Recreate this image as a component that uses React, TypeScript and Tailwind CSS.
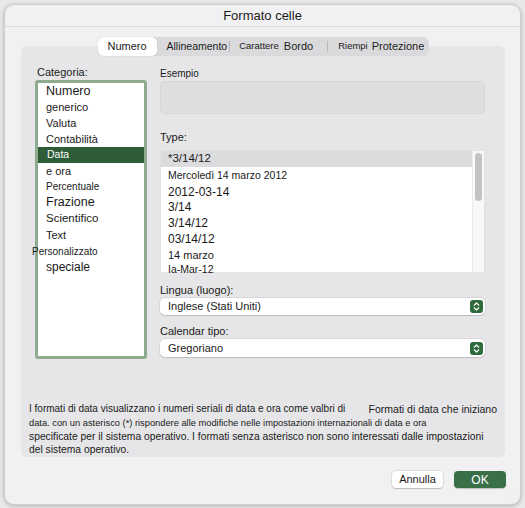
import React from 'react';

const categories: { label: string; h: string; size: string; selected?: boolean; shift?: boolean }[] = [
    { label: 'Numero', h: 'h-[17px]', size: 'text-[12.5px]' },
    { label: 'generico', h: 'h-[15px]', size: 'text-[11px]' },
    { label: 'Valuta', h: 'h-[16px]', size: 'text-[11px]' },
    { label: 'Contabilità', h: 'h-[16px]', size: 'text-[11px]' },
    { label: 'Data', h: 'h-[16px]', size: 'text-[10.5px]', selected: true },
    { label: 'e ora', h: 'h-[16px]', size: 'text-[11px]' },
    { label: 'Percentuale', h: 'h-[15px]', size: 'text-[10px]' },
    { label: 'Frazione', h: 'h-[16px]', size: 'text-[12.5px]' },
    { label: 'Scientifico', h: 'h-[17px]', size: 'text-[11.5px]' },
    { label: 'Text', h: 'h-[16px]', size: 'text-[11px]' },
    { label: 'Personalizzato', h: 'h-[16px]', size: 'text-[10px]', shift: true },
    { label: 'speciale', h: 'h-[16px]', size: 'text-[12px]' },
];

const types: { label: string; h: string; size: string; selected?: boolean }[] = [
    { label: '*3/14/12', h: 'h-[16px]', size: 'text-[11.5px]', selected: true },
    { label: 'Mercoledì 14 marzo 2012', h: 'h-[18px]', size: 'text-[10.5px]' },
    { label: '2012-03-14', h: 'h-[14px]', size: 'text-[12px]' },
    { label: '3/14', h: 'h-[16px]', size: 'text-[12px]' },
    { label: '3/14/12', h: 'h-[16px]', size: 'text-[12px]' },
    { label: '03/14/12', h: 'h-[16px]', size: 'text-[12px]' },
    { label: '14 marzo', h: 'h-[17px]', size: 'text-[11px]' },
    { label: 'Ia-Mar-12', h: 'h-[12px]', size: 'text-[10.5px]' },
];

const Stepper: React.FC = () => (
    <svg width="13" height="13" viewBox="0 0 13 13" className="shrink-0">
        <rect x="0" y="0" width="13" height="13" rx="3" fill="#2f6a3d" />
        <path d="M4.2 5.2 L6.5 3 L8.8 5.2" fill="none" stroke="#fff" strokeWidth="1.2" strokeLinecap="round" strokeLinejoin="round" />
        <path d="M4.2 7.8 L6.5 10 L8.8 7.8" fill="none" stroke="#fff" strokeWidth="1.2" strokeLinecap="round" strokeLinejoin="round" />
    </svg>
);

const Select: React.FC<{ value: string; h: string }> = ({ value, h }) => (
    <div className={`flex ${h} w-full items-center justify-between rounded-[5px] bg-white pl-[8px] pr-[2px] shadow-[0_0_0_1px_rgba(0,0,0,0.06),0_1px_1px_rgba(0,0,0,0.12)]`}>
        <span className="text-[11px] text-[#1a1a1a]">{value}</span>
        <Stepper />
    </div>
);

const App: React.FC = () => {
    return (
        <div
            className="h-[508px] w-[525px] overflow-hidden bg-[#e9e9e9] pl-[4px] pt-[4px] text-[#1a1a1a]"
            style={{ fontFamily: '"Liberation Sans", Arial, sans-serif' }}
        >
            <div className="flex h-[501px] w-[517px] flex-col rounded-[10px] border border-[#cfcfd2] bg-[#f1f1f3] shadow-[0_1px_4px_rgba(0,0,0,0.25)]">
                {/* Title bar */}
                <div className="flex h-[22px] shrink-0 items-center justify-center border-b border-[#dcdcde] text-[13px]">
                    Formato celle
                </div>

                {/* Tabbed panel */}
                <div className="ml-[16px] mt-[19px] h-[411px] w-[484px] rounded-[6px] bg-[#e6e6e8]">
                    <div className="-mt-[9px] flex justify-center">
                        <div className="flex h-[19px] w-[331px] items-center whitespace-nowrap rounded-[6px] bg-[#dadadc] text-[11px]">
                            <div className="flex h-[19px] w-[59px] shrink-0 items-center justify-center rounded-[5px] bg-white shadow-[0_0_1px_rgba(0,0,0,0.3)]">
                                Numero
                            </div>
                            <span className="ml-[10px] text-[10.5px]">Allineamento</span>
                            <span className="ml-[2px] h-[11px] w-px shrink-0 bg-[#b8b8ba]" />
                            <span className="ml-[9px] text-[9.5px]">Carattere</span>
                            <span className="ml-[5px]">Bordo</span>
                            <span className="ml-[14px] h-[11px] w-px shrink-0 bg-[#b8b8ba]" />
                            <span className="ml-[10px] text-[9.5px]">Riempi</span>
                            <span className="ml-[4px]">Protezione</span>
                        </div>
                    </div>

                    <div className="mt-[9px] flex gap-[13px] pl-[14px]">
                        {/* Category column */}
                        <div className="flex w-[112px] flex-col">
                            <div className="flex h-[15px] items-center pl-[2px] text-[11px]">Categoria:</div>
                            <div className="h-[279px] rounded-[3px] border-[3px] border-[#8fab8f] bg-white">
                                {categories.map((c) => (
                                    <div
                                        key={c.label}
                                        className={[
                                            'flex items-center whitespace-nowrap',
                                            c.h,
                                            c.size,
                                            c.selected ? 'bg-[#2e5c36] pl-[9px] text-white' : 'pl-[8px]',
                                            c.shift ? '-ml-[14px]' : '',
                                        ].join(' ')}
                                    >
                                        {c.label}
                                    </div>
                                ))}
                            </div>
                        </div>

                        {/* Right column */}
                        <div className="flex w-[325px] flex-col">
                            <div className="flex h-[16px] items-center text-[10px]">Esempio</div>
                            <div className="h-[33px] rounded-[5px] bg-[#dededf] shadow-[inset_0_0_0_1px_rgba(0,0,0,0.03)]" />

                            <div className="mt-[16px] flex h-[14px] items-center text-[11px]">Type:</div>
                            <div className="mt-[6px] flex h-[123px] border border-[#e2e2e4] bg-white">
                                <div className="flex-1">
                                    {types.map((t) => (
                                        <div
                                            key={t.label}
                                            className={[
                                                'flex items-center whitespace-nowrap pl-[7px]',
                                                t.h,
                                                t.size,
                                                t.selected ? 'bg-[#dcdcde]' : '',
                                            ].join(' ')}
                                        >
                                            {t.label}
                                        </div>
                                    ))}
                                </div>
                                <div className="w-[12px] border-l border-[#ececec] bg-[#f8f8f8] pt-[2px]">
                                    <div className="mx-auto h-[48px] w-[7px] rounded-full bg-[#c3c3c5]" />
                                </div>
                            </div>

                            <div className="mt-[11px] flex h-[13px] items-center text-[11px]">Lingua (luogo):</div>
                            <div className="mt-[1px]">
                                <Select value="Inglese (Stati Uniti)" h="h-[17px]" />
                            </div>

                            <div className="mt-[10px] flex h-[13px] items-center text-[11px]">Calendar tipo:</div>
                            <div className="mt-[1px]">
                                <Select value="Gregoriano" h="h-[18px]" />
                            </div>
                        </div>
                    </div>

                    {/* Description */}
                    <div className="mt-[43px] pl-[8px] leading-none">
                        <div className="flex h-[14px] w-[468px] items-center justify-between whitespace-nowrap text-[10.5px]">
                            <span className="text-[10px]">I formati di data visualizzano i numeri seriali di data e ora come valbri di</span>
                            <span>Formati di data che iniziano</span>
                        </div>
                        <div className="flex h-[15px] items-center whitespace-nowrap text-[9.3px]">
                            data. con un asterisco (*) rispondere alle modifiche nelle impostazioni internazionali di data e ora
                        </div>
                        <div className="flex h-[13px] items-center whitespace-nowrap text-[10.3px]">
                            specificate per il sistema operativo. I formati senza asterisco non sono interessati dalle impostazioni
                        </div>
                        <div className="flex h-[13px] items-center whitespace-nowrap text-[10.3px]">del sistema operativo.</div>
                    </div>
                </div>

                {/* Buttons */}
                <div className="mt-[14px] flex justify-end gap-[11px] pr-[14px]">
                    <button className="flex h-[17px] w-[51px] items-center justify-center rounded-[4px] bg-white text-[11px] shadow-[0_0_0_1px_rgba(0,0,0,0.08),0_1px_1px_rgba(0,0,0,0.15)]">
                        Annulla
                    </button>
                    <button className="flex h-[17px] w-[52px] items-center justify-center rounded-[4px] bg-[#3a7048] text-[12px] text-white shadow-[0_1px_1px_rgba(0,0,0,0.2)]">
                        OK
                    </button>
                </div>
            </div>
        </div>
    );
};

export default App;
